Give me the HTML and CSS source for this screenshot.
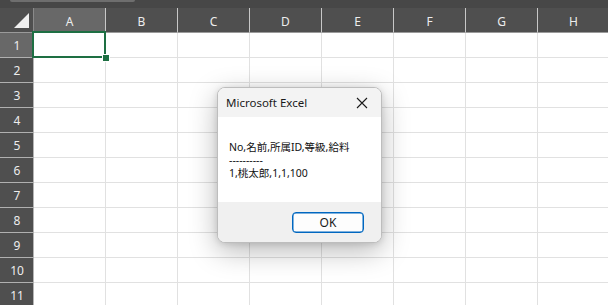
FILE: index.html
```html
<html>
<head>
  <title>Microsoft Excel</title>
  <link rel="stylesheet" href="styles.css">
</head>
<body>

<div class="app">
  <div class="topband"><div class="scrollthumb"></div></div>

  <div class="sheet">
    <div class="corner"><div class="tri"></div></div>
    <div class="colhead active">A</div>
    <div class="colhead">B</div>
    <div class="colhead">C</div>
    <div class="colhead">D</div>
    <div class="colhead">E</div>
    <div class="colhead">F</div>
    <div class="colhead">G</div>
    <div class="colhead">H</div>
  </div>
  <div class="sheet" id="rows"></div>

  <!-- message box -->
  <div class="msgbox">
    <div class="msg-title">
      <span>Microsoft Excel</span>
      <svg class="msg-close" width="12" height="12" viewBox="0 0 12 12">
        <path d="M1 1 L11 11 M11 1 L1 11" stroke="#1a1a1a" stroke-width="1.1" fill="none"/>
      </svg>
    </div>
    <div class="msg-body">
      <div>No,名前,所属ID,等級,給料</div>
      <div>----------</div>
      <div>1,桃太郎,1,1,100</div>
    </div>
    <div class="msg-foot">
      <button class="ok-btn">OK</button>
    </div>
  </div>
</div>

<script>
  const rows = document.getElementById('rows');
  for (let r = 1; r <= 11; r++) {
    let html = `<div class="rowhead${r === 1 ? ' active' : ''}">${r}</div>`;
    for (let c = 0; c < 8; c++) {
      if (r === 1 && c === 0) {
        html += '<div class="cell"><div class="sel"><div class="handle"></div></div></div>';
      } else {
        html += '<div class="cell"></div>';
      }
    }
    rows.innerHTML += html;
  }
</script>

</body>
</html>
```

FILE: styles.css
```css
body {
  margin: 0;
  background: #fff;
  font-family: "Noto Sans", "Noto Sans CJK JP", sans-serif;
}
.app {
  position: relative;
  width: 608px;
  height: 305px;
  overflow: hidden;
}
.topband {
  height: 8px;
  background: #474747;
  position: relative;
}
.scrollthumb {
  position: absolute;
  left: 10px;
  top: 0;
  width: 125px;
  height: 2px;
  background: #6e6e6e;
  border-radius: 0 0 2px 2px;
}
.sheet {
  display: grid;
  grid-template-columns: 34px repeat(8, 72px);
  grid-auto-rows: 25px;
}
.sheet:first-of-type {
  grid-auto-rows: 24px;
}
.corner {
  background: #4f4f4f;
  border-right: 1px solid #8a8a8a;
  border-bottom: 1px solid #9a9a9a;
  box-sizing: border-box;
  position: relative;
}
.tri {
  position: absolute;
  right: 4px;
  bottom: 4px;
  width: 0;
  height: 0;
  border-left: 15px solid transparent;
  border-bottom: 15px solid #f0f0f0;
}
.colhead {
  background: #4f4f4f;
  color: #ededed;
  font-size: 12px;
  display: flex;
  align-items: center;
  justify-content: center;
  box-sizing: border-box;
  border-right: 1px solid #c8c8c8;
  border-bottom: 1px solid #9a9a9a;
  padding-top: 2px;
}
.colhead.active {
  background: #686868;
}
.rowhead {
  background: #4f4f4f;
  color: #ededed;
  font-size: 12px;
  display: flex;
  align-items: center;
  justify-content: center;
  box-sizing: border-box;
  border-right: 1px solid #b5b5b5;
  border-bottom: 1px solid #b0b0b0;
  padding-left: 1px;
}
.rowhead.active {
  background: #686868;
}
.cell {
  box-sizing: border-box;
  border-right: 1px solid #e1e1e1;
  border-bottom: 1px solid #e1e1e1;
  position: relative;
}
.sel {
  position: absolute;
  left: -2px;
  top: -2px;
  right: -1px;
  bottom: -1px;
  border: 2px solid #1e6f43;
  z-index: 2;
}
.handle {
  position: absolute;
  right: -5px;
  bottom: -5px;
  width: 6px;
  height: 6px;
  background: #1e6f43;
  box-shadow: 0 0 0 1px #fff;
}

/* Message box */
.msgbox {
  position: absolute;
  left: 217px;
  top: 87px;
  width: 165px;
  height: 156px;
  border-radius: 8px;
  overflow: hidden;
  background: #fff;
  border: 1px solid #bdbdbd;
  box-sizing: border-box;
  box-shadow: 0 8px 28px rgba(0,0,0,0.28), 0 1px 6px rgba(0,0,0,0.12);
  display: flex;
  flex-direction: column;
  z-index: 5;
}
.msg-title {
  height: 29px;
  background: #f3f3f3;
  display: flex;
  align-items: center;
  justify-content: space-between;
  padding: 0 13px 0 8px;
  font-size: 11.5px;
  color: #1a1a1a;
}
.msg-close {
  display: block;
}
.msg-body {
  flex: 1;
  background: #fff;
  padding: 24px 0 0 11px;
  font-size: 10.5px;
  line-height: 13px;
  color: #111;
}
.msg-body div {
  height: 13px;
}
.msg-foot {
  height: 40px;
  background: #f0f0f0;
  display: flex;
  justify-content: flex-end;
  align-items: center;
  padding-right: 17px;
}
.ok-btn {
  width: 72px;
  height: 21px;
  border: 1px solid #0067c0;
  border-radius: 4px;
  background: #fdfdfd;
  font-family: "Noto Sans", sans-serif;
  font-size: 12px;
  color: #1a1a1a;
  padding: 0;
  box-shadow: inset 0 0 0 0.5px #0067c0;
}
```
